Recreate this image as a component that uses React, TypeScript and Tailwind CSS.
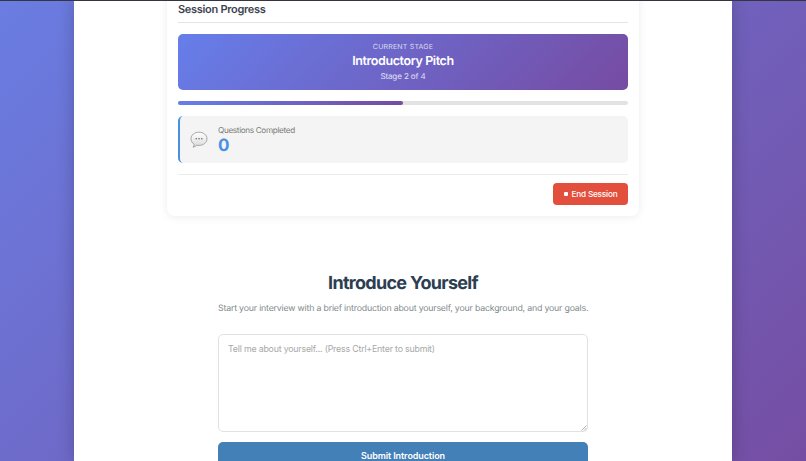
export default function App() {
  return (
    <div className="relative h-[461px] overflow-hidden bg-[linear-gradient(135deg,#6a7de2,#754ea3)] font-['Inter',sans-serif] [text-rendering:geometricPrecision]">
      {/* thin browser edge */}
      <div className="absolute inset-x-0 top-0 z-10 h-px bg-[#33363f]" />

      <main className="mx-auto h-[461px] w-[658px] overflow-hidden bg-white shadow-[0_0_16px_rgba(0,0,0,0.22)]">
        {/* Session card, scrolled part way off the top */}
        <section className="mx-auto mt-[-12px] w-[472px] rounded-b-lg bg-white px-[11px] pt-3 pb-[11px] shadow-[0_1px_8px_rgba(0,0,0,0.08)]">
          <h2 className="border-b border-[#e5e5e5] pt-[2px] pb-[5px] text-[11px] leading-[15px] font-semibold tracking-[-0.3px] text-[#3d4450]">
            Session Progress
          </h2>

          <div className="mt-[11px] flex h-[56px] flex-col items-center rounded-[5px] bg-[linear-gradient(135deg,#667eea,#764ba2)] pt-2 text-white">
            <div className="text-[7px] leading-[10px] tracking-[0.2px] text-white/75">CURRENT STAGE</div>
            <div className="mt-[2px] text-[12.500px] leading-[16px] font-semibold tracking-[-0.4px]">Introductory Pitch</div>
            <div className="mt-[1px] text-[8px] leading-[11px] tracking-[-0.1px] text-white/80">Stage 2 of 4</div>
          </div>

          <div className="mt-[11px] h-1 rounded-full bg-[#e2e2e2]">
            <div className="h-1 w-1/2 rounded-full bg-[linear-gradient(90deg,#667eea,#764ba2)]" />
          </div>

          <div className="mt-[11px] flex h-[47px] items-center gap-[10px] rounded-[5px] border-l-2 border-[#4a90e2] bg-[#f4f4f4] pl-[10px]">
            <svg width="18" height="18" viewBox="0 0 18 18" className="shrink-0">
              <defs>
                <linearGradient id="bubble" x1="0" y1="0" x2="0" y2="1">
                  <stop offset="0" stopColor="#ffffff" />
                  <stop offset="1" stopColor="#d9d9d9" />
                </linearGradient>
              </defs>
              <path
                d="M9 1.2c4.500 0 8 2.800 8 6.600s-3.500 6.600-8 6.600c-.8 0-1.500-.1-2.200-.2-1 .9-2.300 1.800-3.800 2 .7-.8 1.100-1.700 1.200-2.900C2.300 12.100 1 10.100 1 7.800 1 4 4.500 1.200 9 1.200z"
                fill="url(#bubble)"
                stroke="#9c9e9c"
                strokeWidth="0.9"
              />
              <circle cx="6.200" cy="7.800" r="0.750" fill="#5f5f5f" />
              <circle cx="9" cy="7.800" r="0.750" fill="#5f5f5f" />
              <circle cx="11.800" cy="7.800" r="0.750" fill="#5f5f5f" />
            </svg>
            <div className="pt-[2px]">
              <div className="text-[8.200px] leading-[11px] tracking-[-0.35px] text-[#7b7b7b]">Questions Completed</div>
              <div className="text-[17px] leading-[20px] font-bold text-[#4a90e2]">0</div>
            </div>
          </div>

          <div className="mt-[11px] flex justify-end border-t border-[#ececec] pt-2">
            <button className="flex h-[22px] w-[75px] items-center justify-center gap-[4px] rounded-[4px] bg-[#e24f3d] text-[8.200px] font-medium tracking-[-0.2px] text-white">
              <span className="h-[4px] w-[4px] rounded-[1px] bg-white" />
              End Session
            </button>
          </div>
        </section>

        {/* Introduction form */}
        <section className="mx-auto mt-[56px] flex w-[370px] flex-col">
          <h1 className="text-center text-[18px] leading-[23px] font-bold tracking-[-0.7px] text-[#2c3e50]">Introduce Yourself</h1>
          <p className="mt-[7px] text-center text-[8.800px] leading-[13px] tracking-[-0.2px] whitespace-nowrap text-[#7f8c8d]">
            Start your interview with a brief introduction about yourself, your background, and your goals.
          </p>
          <div className="relative mt-[19px] h-[98px]">
            <textarea
              placeholder="Tell me about yourself... (Press Ctrl+Enter to submit)"
              className="h-full w-full resize-none rounded-[5px] border border-[#e2e2e2] px-[9px] py-[7px] text-[8.800px] leading-[13px] tracking-[-0.19px] text-[#333] outline-none placeholder:text-[#a8a8a8]"
            />
            {/* light resize grip */}
            <svg width="6" height="6" viewBox="0 0 6 6" className="absolute right-[1px] bottom-[1px]">
              <path d="M0.500 5.500L5.500 0.500M3 5.500L5.500 3" stroke="#a3a3a3" strokeWidth="0.8" fill="none" />
            </svg>
          </div>
          <button className="mt-[10px] h-[27px] shrink-0 rounded-[5px] bg-[#4480b8] text-[9px] font-semibold tracking-[-0.1px] text-white">
            Submit Introduction
          </button>
        </section>
      </main>
    </div>
  );
}
